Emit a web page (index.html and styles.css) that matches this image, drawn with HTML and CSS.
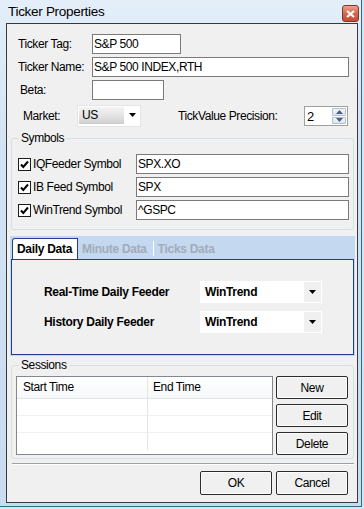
FILE: index.html
```html
<!DOCTYPE html>
<html lang="en">
<head>
    <meta charset="UTF-8">
    <title>Ticker Properties</title>
    <link rel="stylesheet" href="styles.css">
</head>
<body>
    <div class="window">
        <div class="titlebar">
            <span class="title">Ticker Properties</span>
            <span class="close">
                <svg width="9" height="8" viewBox="0 0 9 8"><path d="M1 1 L8 7 M8 1 L1 7" stroke="#fff" stroke-width="2.2"/></svg>
            </span>
        </div>
        <div class="client">
            <div class="fields">
                <div class="row"><span class="lbl">Ticker Tag:</span><div class="input w-tag">S&amp;P 500</div></div>
                <div class="row"><span class="lbl">Ticker Name:</span><div class="input w-name">S&amp;P 500 INDEX,RTH</div></div>
                <div class="row"><span class="lbl lbl-beta">Beta:</span><div class="input w-beta"></div></div>
                <div class="row row-market">
                    <span class="lbl-market">Market:</span>
                    <div class="combo">
                        <span class="combo-val">US</span>
                        <span class="combo-arrow"><svg width="7" height="4" viewBox="0 0 7 4"><path d="M0 0 H7 L3.5 4 Z" fill="#000"/></svg></span>
                    </div>
                    <span class="lbl-tick">TickValue Precision:</span>
                    <div class="spin">
                        <span class="spin-val">2</span>
                        <div class="spin-btns">
                            <span class="spin-btn"><svg width="7" height="4" viewBox="0 0 7 4"><path d="M0 4 H7 L3.5 0 Z" fill="#4a5f86"/></svg></span>
                            <span class="spin-btn"><svg width="7" height="4" viewBox="0 0 7 4"><path d="M0 0 H7 L3.5 4 Z" fill="#4a5f86"/></svg></span>
                        </div>
                    </div>
                </div>
            </div>

            <div class="group symbols">
                <span class="legend">Symbols</span>
                <div class="sym-row">
                    <span class="check"><svg width="13" height="13" viewBox="0 0 13 13"><rect x="0.5" y="0.5" width="12" height="12" fill="#fff" stroke="#1c1c1c"/><path d="M3 6.5 L5.3 9 L10 3.5" fill="none" stroke="#000" stroke-width="2"/></svg></span>
                    <span class="sym-lbl">IQFeeder Symbol</span>
                    <div class="input w-sym">SPX.XO</div>
                </div>
                <div class="sym-row">
                    <span class="check"><svg width="13" height="13" viewBox="0 0 13 13"><rect x="0.5" y="0.5" width="12" height="12" fill="#fff" stroke="#1c1c1c"/><path d="M3 6.5 L5.3 9 L10 3.5" fill="none" stroke="#000" stroke-width="2"/></svg></span>
                    <span class="sym-lbl">IB Feed Symbol</span>
                    <div class="input w-sym">SPX</div>
                </div>
                <div class="sym-row">
                    <span class="check"><svg width="13" height="13" viewBox="0 0 13 13"><rect x="0.5" y="0.5" width="12" height="12" fill="#fff" stroke="#1c1c1c"/><path d="M3 6.5 L5.3 9 L10 3.5" fill="none" stroke="#000" stroke-width="2"/></svg></span>
                    <span class="sym-lbl">WinTrend Symbol</span>
                    <div class="input w-sym">^GSPC</div>
                </div>
            </div>

            <div class="tabs">
                <div class="tab-strip">
                    <span class="tab active">Daily Data</span>
                    <span class="tab">Minute Data</span>
                    <span class="tab-sep"></span>
                    <span class="tab">Ticks Data</span>
                </div>
                <div class="tab-panel">
                    <div class="feed-row">
                        <span class="feed-lbl">Real-Time Daily Feeder</span>
                        <div class="drop"><span class="drop-val">WinTrend</span><span class="drop-btn"><svg width="7" height="4" viewBox="0 0 7 4"><path d="M0 0 H7 L3.5 4 Z" fill="#000"/></svg></span></div>
                    </div>
                    <div class="feed-row">
                        <span class="feed-lbl">History Daily Feeder</span>
                        <div class="drop"><span class="drop-val">WinTrend</span><span class="drop-btn"><svg width="7" height="4" viewBox="0 0 7 4"><path d="M0 0 H7 L3.5 4 Z" fill="#000"/></svg></span></div>
                    </div>
                </div>
            </div>

            <div class="group sessions">
                <span class="legend">Sessions</span>
                <div class="sess-body">
                    <div class="list">
                        <div class="list-head"><span class="col-a">Start Time</span><span class="col-b">End Time</span></div>
                        <div class="list-row"><span class="col-a"></span><span class="col-b"></span></div>
                        <div class="list-row"><span class="col-a"></span><span class="col-b"></span></div>
                        <div class="list-row"><span class="col-a"></span><span class="col-b"></span></div>
                    </div>
                    <div class="side-btns">
                        <button class="btn">New</button>
                        <button class="btn">Edit</button>
                        <button class="btn">Delete</button>
                    </div>
                </div>
            </div>

            <div class="sep"></div>

            <div class="actions">
                <button class="btn btn-big">OK</button>
                <button class="btn btn-big">Cancel</button>
            </div>
        </div>
    </div>
</body>
</html>
```

FILE: styles.css
```css
* {
    box-sizing: border-box;
}
body {
    margin: 0;
    background-color: #d5e5f4;
    font-family: "Liberation Sans", Arial, sans-serif;
    font-size: 12px;
    letter-spacing: -0.4px;
    color: #000;
}
.window {
    width: 362px;
    height: 507px;
    padding: 0 3px 3px 6px;
    background: linear-gradient(#e3eef9, #d2e3f4 30%, #c8dcf0);
    border-right: 1px solid #2e6c82;
    border-bottom: 1px solid #2e6c82;
}
.titlebar {
    height: 23px;
    display: flex;
    justify-content: space-between;
    align-items: flex-start;
}
.title {
    margin: 4px 0 0 2px;
    font-size: 13.5px;
    letter-spacing: -0.3px;
    color: #000;
}
.close {
    width: 17px;
    height: 17px;
    margin: 5px -1px 0 0;
    display: flex;
    align-items: center;
    justify-content: center;
    border: 1px solid #7a3a2c;
    border-radius: 3px;
    background: linear-gradient(#eba08e, #d6674d 50%, #c84a30);
}
.client {
    width: 352px;
    height: 480px;
    border: 1px solid #3a3a3a;
    background-color: #f0f0f0;
}

/* text boxes */
.input {
    height: 20px;
    border: 1px solid #7a7a7a;
    background-color: #fff;
    padding: 0 1px;
    line-height: 18px;
    white-space: nowrap;
}
.fields {
    padding: 10px 0 0 11px;
}
.row {
    display: flex;
    align-items: center;
    height: 20px;
    margin-bottom: 3px;
}
.lbl {
    width: 74px;
}
.lbl-beta {
    padding-left: 2px;
}
.w-tag {
    width: 89px;
}
.w-name {
    width: 257px;
}
.w-beta {
    width: 72px;
}
.row-market {
    height: 22px;
    margin: 5px 0 0 0;
}
.lbl-market {
    width: 59px;
    padding-left: 5px;
}
.combo {
    width: 64px;
    height: 22px;
    display: flex;
    align-items: center;
    justify-content: space-between;
    padding: 1px 1px 3px 1px;
    background-color: #fff;
    border: 1px solid #e4e4e4;
}
.combo-val {
    width: 45px;
    height: 17px;
    padding-left: 3px;
    line-height: 17px;
    background: linear-gradient(#f4f4f4, #e4e4e4 50%, #cfcfcf);
}
.combo-arrow {
    width: 13px;
    display: flex;
    justify-content: center;
}
.lbl-tick {
    width: 126px;
    margin-left: 37px;
    white-space: nowrap;
}
.spin {
    width: 44px;
    height: 20px;
    display: flex;
    justify-content: space-between;
    border: 1px solid #a0a0a0;
    background-color: #fff;
    padding: 1px 1px 1px 2px;
    font-size: 13px;
}
.spin-val {
    line-height: 17px;
}
.spin-btns {
    width: 14px;
    display: flex;
    flex-direction: column;
    gap: 1px;
}
.spin-btn {
    flex: 1;
    display: flex;
    align-items: center;
    justify-content: center;
    border: 1px solid #b3bfcc;
    border-radius: 1px;
    background: linear-gradient(#f2f6fa, #dce5ee);
}

/* group boxes */
.group {
    position: relative;
    margin-left: 4px;
    width: 343px;
    border: 1px solid #d5dfe5;
    border-radius: 3px;
}
.legend {
    position: absolute;
    top: -8px;
    left: 7px;
    padding: 0 2px;
    background-color: #f0f0f0;
    line-height: 14px;
}
.symbols {
    margin-top: 11px;
    height: 92px;
    padding: 15px 0 0 6px;
}
.sym-row {
    display: flex;
    align-items: center;
    height: 20px;
    margin-bottom: 3px;
}
.check {
    width: 15px;
    height: 13px;
}
.sym-lbl {
    width: 103px;
}
.w-sym {
    width: 213px;
}

/* tab control */
.tabs {
    margin: 6px 0 0 3px;
    width: 345px;
    height: 120px;
    background-color: #c4d8f0;
    padding: 0 1px 1px 1px;
}
.tab-strip {
    height: 23px;
    display: flex;
    align-items: flex-end;
    font-weight: bold;
    letter-spacing: -0.3px;
}
.tab {
    height: 19px;
    padding: 0 6px 0 4px;
    line-height: 19px;
    color: #a3abb8;
}
.tab.active {
    height: 21px;
    margin-left: 1px;
    padding: 0 5px 0 4px;
    color: #000;
    background-color: #fff;
    border: 1px solid #1f3f8c;
    border-bottom: none;
    border-radius: 3px 0 0 0;
    line-height: 20px;
}
.tab-sep {
    width: 1px;
    height: 15px;
    margin: 0 0 3px 0;
    background-color: #fff;
}
.tab-panel {
    height: 96px;
    border: 1px solid #1f3f8c;
    background-color: #f0f0f0;
    padding: 21px 0 0 32px;
}
.feed-row {
    display: flex;
    align-items: center;
    height: 22px;
    margin-bottom: 8px;
    font-weight: bold;
    letter-spacing: -0.3px;
}
.feed-lbl {
    width: 156px;
}
.drop {
    width: 122px;
    height: 22px;
    display: flex;
    justify-content: space-between;
    background-color: #fff;
    padding: 1px;
}
.drop-val {
    padding-left: 4px;
    line-height: 20px;
}
.drop-btn {
    width: 17px;
    display: flex;
    align-items: center;
    justify-content: center;
    background-color: #f0f0f0;
}

/* sessions */
.sessions {
    margin-top: 9px;
    height: 94px;
    padding: 10px 0 0 4px;
}
.sess-body {
    display: flex;
    gap: 3px;
}
.list {
    width: 257px;
    height: 79px;
    border: 1px solid #828790;
    background-color: #fff;
}
.list-head {
    display: flex;
    height: 22px;
    border-bottom: 1px solid #e5e5e5;
    background: linear-gradient(#fff, #f7f8fa);
    line-height: 21px;
}
.list-row {
    display: flex;
    height: 17px;
    border-bottom: 1px solid #f0f0f0;
}
.list-row:last-child {
    border-bottom: none;
}
.col-a {
    width: 131px;
    padding-left: 6px;
    border-right: 1px solid #e5e5e5;
}
.col-b {
    flex: 1;
    padding-left: 5px;
}
.side-btns {
    display: flex;
    flex-direction: column;
    gap: 5px;
}
.btn {
    width: 72px;
    height: 23px;
    padding: 0;
    border: 1px solid #2b2b2b;
    border-radius: 2px;
    background-color: #f0f0f0;
    font-family: "Liberation Sans", Arial, sans-serif;
    font-size: 12px;
    letter-spacing: -0.4px;
    color: #000;
    box-shadow: inset 0 0 0 1px #fdfdfd;
}
.sep {
    margin: 4px 0 0 5px;
    width: 342px;
    height: 2px;
    border-top: 1px solid #a0a0a0;
    border-bottom: 1px solid #fff;
}
.actions {
    display: flex;
    justify-content: flex-end;
    gap: 4px;
    margin-top: 6px;
    padding-right: 9px;
}
.btn-big {
    height: 24px;
}
```
